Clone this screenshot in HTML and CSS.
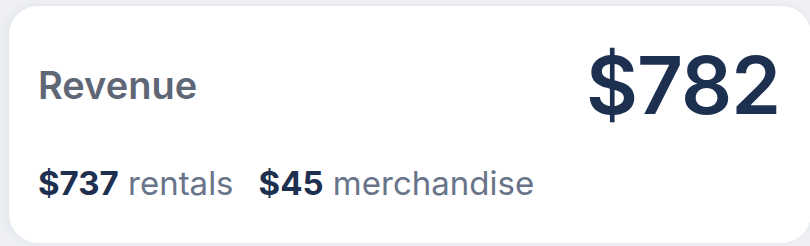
FILE: index.html
```html
<!DOCTYPE html>
<html lang="en">
<head>
<meta charset="utf-8">
<link rel="stylesheet" href="styles.css">
</head>
<body>
<div class="card">
  <div class="top">
    <div class="label">Revenue</div>
    <div class="total">$782</div>
  </div>
  <div class="breakdown">
    <span class="item"><b>$737</b> rentals</span>
    <span class="item"><b>$45</b> merchandise</span>
  </div>
</div>
</body>
</html>
```

FILE: styles.css
```css
html, body {
  margin: 0;
  padding: 0;
}
body {
  width: 810px;
  height: 246px;
  overflow: hidden;
  background: #eef0f4;
  font-family: Inter, "Noto Sans", sans-serif;
}
.card {
  box-sizing: border-box;
  margin: 5px 0 0 8px;
  width: 804px;
  height: 239px;
  background: #ffffff;
  border: 1px solid #e6e9ee;
  border-radius: 30px;
  box-shadow: -4px 0 8px rgba(30, 40, 70, 0.04);
  padding: 0 31px 0 29px;
  display: flex;
  flex-direction: column;
}
.top {
  display: flex;
  justify-content: space-between;
  align-items: center;
  height: 157px;
}
.label {
  font-size: 38px;
  font-weight: 600;
  color: #5f6776;
}
.total {
  font-size: 80px;
  font-weight: 600;
  color: #1e3050;
  letter-spacing: -1px;
}
.breakdown {
  display: flex;
  gap: 25px;
  font-size: 33px;
  line-height: 40px;
  color: #687489;
}
.breakdown b {
  font-weight: 700;
  color: #1e3050;
}
```
